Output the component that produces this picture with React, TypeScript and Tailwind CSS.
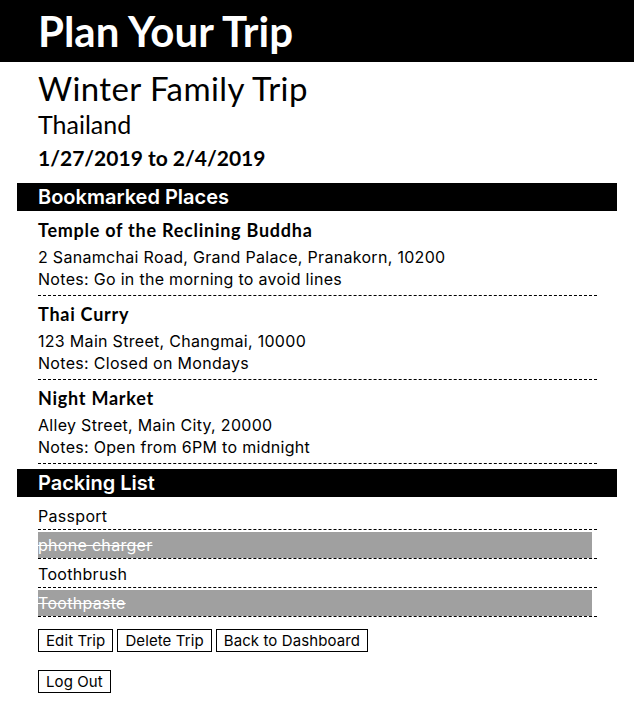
import React from "react";

type Place = {
  name: string;
  address: string;
  notes: string;
};

type PackItem = {
  name: string;
  packed: boolean;
};

const places: Place[] = [
  {
    name: "Temple of the Reclining Buddha",
    address: "2 Sanamchai Road, Grand Palace, Pranakorn, 10200",
    notes: "Go in the morning to avoid lines",
  },
  {
    name: "Thai Curry",
    address: "123 Main Street, Changmai, 10000",
    notes: "Closed on Mondays",
  },
  {
    name: "Night Market",
    address: "Alley Street, Main City, 20000",
    notes: "Open from 6PM to midnight",
  },
];

const packing: PackItem[] = [
  { name: "Passport", packed: false },
  { name: "phone charger", packed: true },
  { name: "Toothbrush", packed: false },
  { name: "Toothpaste", packed: true },
];

const head = "font-['Lato','Liberation_Sans',sans-serif]";
const body = "font-['Inter','Liberation_Sans',sans-serif]";

const btn =
  "border border-black h-[23px] px-[7px] text-[15px] tracking-[0.1px] leading-none";

const App = () => {
  return (
    <div className={`min-h-[711px] bg-white text-black ${body}`}>
      {/* HEADER */}
      <header className="bg-black h-[62px] flex items-center px-[38px]">
        <h1 className={`${head} text-white text-[42px] font-bold leading-none`}>
          Plan Your Trip
        </h1>
      </header>

      <main className="px-[17px]">
        <div className="pl-[21px] pr-[20px]">
          <h2
            className={`${head} text-[33px] tracking-[0.4px] leading-[36px] mt-[8px]`}
          >
            Winter Family Trip
          </h2>
          <h3 className={`${head} text-[25px] leading-[36px]`}>Thailand</h3>
          <h3 className={`${head} text-[21px] leading-[32px] font-bold`}>
            1/27/2019 to 2/4/2019
          </h3>
        </div>

        {/* BOOKMARKED PLACES */}
        <section className="mt-[9px]">
          <h2 className="bg-black text-white text-[20px] font-semibold h-[28px] leading-[28px] pl-[21px]">
            Bookmarked Places
          </h2>
          <ul className="pl-[21px] pr-[20px] pt-[1px]">
            {places.map((place, index) => (
              <li
                key={index}
                className="pt-[6px] pb-[5px] border-b border-dashed border-black"
              >
                <h4
                  className={`${head} text-[18px] tracking-[0.75px] leading-[24px] font-bold`}
                >
                  {place.name}
                </h4>
                <p className="text-[16px] tracking-[0.3px] leading-[22px] mt-[4px]">
                  {place.address}
                </p>
                <p className="text-[16px] tracking-[0.3px] leading-[22px]">
                  Notes: {place.notes}
                </p>
              </li>
            ))}
          </ul>
        </section>

        {/* PACKING LIST */}
        <section className="mt-[5px]">
          <h2 className="bg-black text-white text-[20px] font-semibold h-[28px] leading-[28px] pl-[21px]">
            Packing List
          </h2>
          <ul className="pl-[21px] pr-[20px] pt-[4px]">
            {packing.map((item, index) => (
              <li
                key={index}
                className="pt-[2px] border-b border-dashed border-black"
              >
                <div
                  className={`h-[26px] leading-[26px] text-[16px] tracking-[0.3px] mr-[5px] ${
                    item.packed ? "bg-[#a0a0a0] text-white line-through" : ""
                  }`}
                >
                  {item.name}
                </div>
              </li>
            ))}
          </ul>
        </section>

        {/* ACTIONS */}
        <div className="pl-[21px] mt-[12px] flex gap-[4px]">
          <button className={btn}>Edit Trip</button>
          <button className={btn}>Delete Trip</button>
          <button className={btn}>Back to Dashboard</button>
        </div>
        <div className="pl-[21px] mt-[17px]">
          <button className={btn}>Log Out</button>
        </div>
      </main>
    </div>
  );
};

export default App;
